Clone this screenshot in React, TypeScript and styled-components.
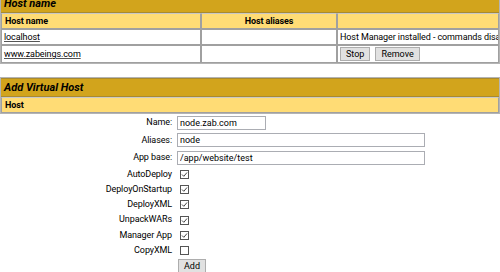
import React from "react";
import styled, { createGlobalStyle } from "styled-components";

const Global = createGlobalStyle`
  html, body { margin: 0; padding: 0; background: #fff; overflow: hidden; }
  body { font-family: Roboto, "Liberation Sans", sans-serif; font-size: 9px; letter-spacing: -0.1px; color: #000; }
`;

const Page = styled.div`
  margin-top: -7px;
  width: 500px;
  display: flex;
  flex-direction: column;
`;

const Table = styled.table`
  width: 100%;
  table-layout: fixed;
  border-collapse: separate;
  border-spacing: 0;
  border: 1px solid #b4b4b4;
`;

const TitleCell = styled.td`
  background: #d2a41c;
  font-style: italic;
  font-weight: bold;
  font-size: 11px;
  letter-spacing: 0;
  height: 17px;
  padding: 0 3px;
  border: 1px solid #a88a30;
  border-left: none;
  border-right: none;
`;

const HeaderCell = styled.td<{ $center?: boolean }>`
  background: #ffdc75;
  font-weight: bold;
  text-align: ${(p) => (p.$center ? "center" : "left")};
  height: 14px;
  padding: 0 3px;
  border: 1px solid #a0a0a0;
  border-top-color: #c8c8c8;
`;

const Cell = styled.td`
  height: 14px;
  padding: 0 2px;
  border: 1px solid #a0a0a0;
  white-space: nowrap;
  overflow: hidden;
  background: #fff;
`;

const HostLink = styled.a`
  color: #000;
  text-decoration: underline;
  text-decoration-color: #555;
`;

const Button = styled.button`
  font: inherit;
  height: 14px;
  line-height: 12px;
  padding: 0 5px;
  margin: 1px 5px 1px 0;
  background: #e1e1e1;
  border: 1px solid #adadad;
  color: #000;
  vertical-align: middle;
`;

const Spacer = styled.div`
  height: 13px;
`;

const Form = styled.div`
  display: grid;
  grid-template-columns: 172px auto;
  column-gap: 5px;
  align-items: center;
`;

const Label = styled.div<{ $tall?: boolean }>`
  text-align: right;
  height: ${(p) => (p.$tall ? "17.5px" : "15.3px")};
  line-height: ${(p) => (p.$tall ? "17.5px" : "15.3px")};
  white-space: nowrap;
`;

const Field = styled.div`
  display: flex;
  align-items: center;
`;

const TextInput = styled.input<{ $w: number }>`
  width: ${(p) => p.$w}px;
  height: 14px;
  box-sizing: border-box;
  border: 1px solid #abadb3;
  font: inherit;
  padding: 0 2px;
  margin: 0;
  outline: none;
`;

const Check = styled.span`
  display: inline-flex;
  width: 9px;
  height: 9px;
  box-sizing: border-box;
  border: 1px solid #555;
  margin-left: 3px;
  align-items: center;
  justify-content: center;
`;

const AddButton = styled(Button)`
  margin-top: 1px;
  margin-left: 1px;
`;

const CheckBox = ({ checked }: { checked: boolean }) => (
  <Check role="checkbox" aria-checked={checked}>
    {checked && (
      <svg width="7" height="7" viewBox="0 0 7 7">
        <path d="M1 3.5 L2.8 5.3 L6 1.5" fill="none" stroke="#444" strokeWidth="1" />
      </svg>
    )}
  </Check>
);

const checks: [string, boolean][] = [
  ["AutoDeploy", true],
  ["DeployOnStartup", true],
  ["DeployXML", true],
  ["UnpackWARs", true],
  ["Manager App", true],
  ["CopyXML", false],
];

export default function App() {
  return (
    <>
      <Global />
      <Page>
        <Table>
          <colgroup>
            <col style={{ width: 200 }} />
            <col style={{ width: 136 }} />
            <col />
          </colgroup>
          <tbody>
            <tr>
              <TitleCell colSpan={3}>Host name</TitleCell>
            </tr>
            <tr>
              <HeaderCell>Host name</HeaderCell>
              <HeaderCell $center>Host aliases</HeaderCell>
              <HeaderCell />
            </tr>
            <tr>
              <Cell>
                <HostLink href="#">localhost</HostLink>
              </Cell>
              <Cell />
              <Cell>Host Manager installed - commands disabled</Cell>
            </tr>
            <tr>
              <Cell>
                <HostLink href="#">www.zabeings.com</HostLink>
              </Cell>
              <Cell />
              <Cell>
                <Button>Stop</Button>
                <Button>Remove</Button>
              </Cell>
            </tr>
          </tbody>
        </Table>
        <Spacer />
        <Table>
          <tbody>
            <tr>
              <TitleCell>Add Virtual Host</TitleCell>
            </tr>
            <tr>
              <HeaderCell>Host</HeaderCell>
            </tr>
          </tbody>
        </Table>
        <Form>
          <Label $tall>Name:</Label>
          <Field>
            <TextInput $w={89} defaultValue="node.zab.com" />
          </Field>
          <Label $tall>Aliases:</Label>
          <Field>
            <TextInput $w={248} defaultValue="node" />
          </Field>
          <Label $tall>App base:</Label>
          <Field>
            <TextInput $w={248} defaultValue="/app/website/test" />
          </Field>
          {checks.map(([name, on]) => (
            <React.Fragment key={name}>
              <Label>{name}</Label>
              <Field>
                <CheckBox checked={on} />
              </Field>
            </React.Fragment>
          ))}
          <div />
          <Field>
            <AddButton>Add</AddButton>
          </Field>
        </Form>
      </Page>
    </>
  );
}
